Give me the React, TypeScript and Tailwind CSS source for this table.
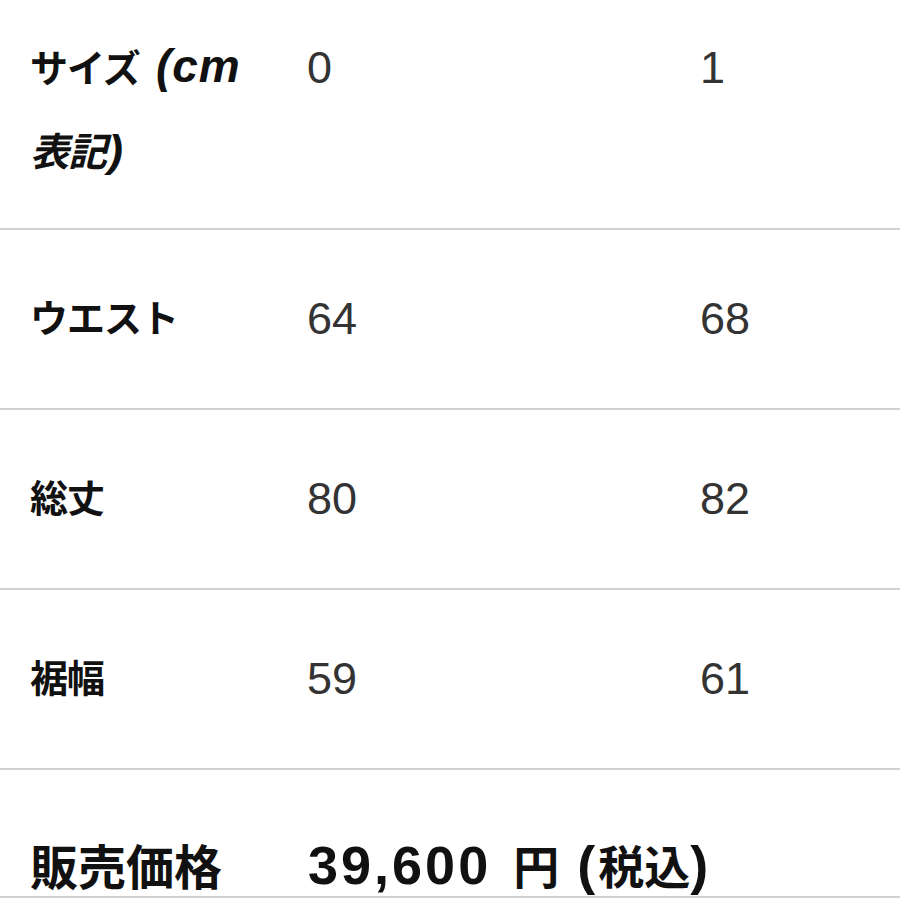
import React from "react";

const rows = [
  { label: "ウエスト", a: "64", b: "68" },
  { label: "総丈", a: "80", b: "82" },
  { label: "裾幅", a: "59", b: "61" },
];

const jp = { fontFamily: '"Liberation Sans", "Noto Sans CJK JP", sans-serif' };
const cjk = { fontFamily: '"Noto Sans CJK JP", sans-serif' };

export default function App() {
  return (
    <div className="w-[900px] h-[900px] bg-white overflow-hidden text-[#111]" style={jp}>
      {/* size header row */}
      <div className="grid grid-cols-[277px_393px_1fr] pl-[30px] h-[230px] pt-[30px] border-b-2 border-[#d2d2d2]">
        <div className="leading-[72px] font-bold whitespace-nowrap">
          <span className="text-[38px] tracking-[-1px]" style={cjk}>サイズ</span>
          <i className="text-[46px] tracking-[1px] pl-[16px]">(cm</i>
          <br />
          <i className="text-[39px] tracking-[-1px]" style={cjk}>表記</i>
          <i className="text-[45px] pl-[2px]">)</i>
        </div>
        <div className="text-[45px] leading-[72px] text-[#333] pt-[2px]">0</div>
        <div className="text-[45px] leading-[72px] text-[#333] pt-[2px]">1</div>
      </div>

      {/* measurement rows */}
      {rows.map((r) => (
        <div
          key={r.label}
          className="grid grid-cols-[277px_393px_1fr] items-center pl-[30px] h-[180px] border-b-2 border-[#d2d2d2]"
        >
          <div className="text-[38px] leading-[48px] font-bold tracking-[-1px] mb-[6px]" style={cjk}>{r.label}</div>
          <div className="text-[45px] text-[#333]">{r.a}</div>
          <div className="text-[45px] text-[#333]">{r.b}</div>
        </div>
      ))}

      {/* price */}
      <div className="grid grid-cols-[278px_1fr] items-center pl-[30px] h-[128px] pt-[62px] border-b-2 border-[#d2d2d2]">
        <div className="text-[48px] leading-[60px] font-bold" style={cjk}>販売価格</div>
        <div className="text-[54px] leading-[60px] font-bold whitespace-nowrap tracking-[3px]">
          39,600 <span className="text-[46px] tracking-normal pl-[4px]" style={cjk}>円</span> (
          <span className="text-[46px] tracking-normal" style={cjk}>税込</span>)
        </div>
      </div>
    </div>
  );
}
